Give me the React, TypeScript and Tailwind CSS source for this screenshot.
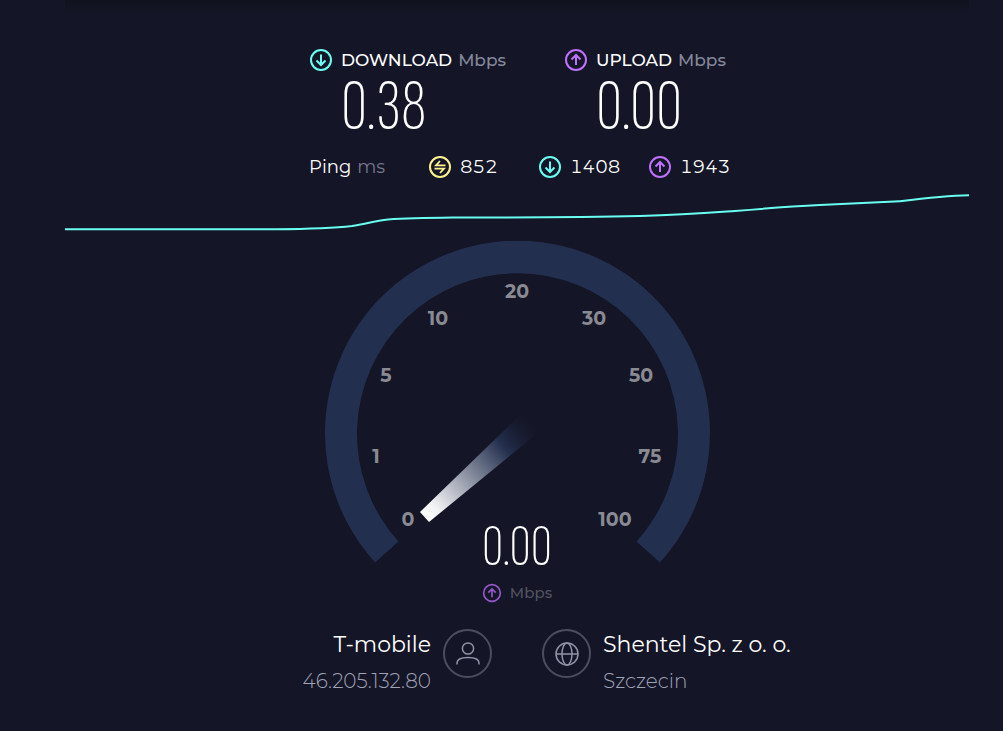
import { ReactNode } from 'react'

const CircleArrow = ({ up = false, size = 'size-6' }: { up?: boolean; size?: string }) => (
  <svg viewBox="0 0 24 24" fill="none" stroke="currentColor" strokeWidth="2" className={`${size} shrink-0`} aria-hidden="true">
    <circle cx="12" cy="12" r="10" />
    {up ? <path d="M12 17V7.5M7.5 11.5L12 7L16.5 11.5" /> : <path d="M12 6.5V16.5M7.5 12.5L12 17L16.5 12.5" />}
  </svg>
)

const CirclePing = () => (
  <svg viewBox="0 0 24 24" fill="none" stroke="currentColor" strokeWidth="2" className="size-6 shrink-0" aria-hidden="true">
    <circle cx="12" cy="12" r="10" />
    <path d="M17.5 10.3H8L12 6M6.5 13.7H16L12 18" strokeWidth="1.8" />
  </svg>
)

const UserIcon = () => (
  <svg viewBox="0 0 26 26" fill="none" stroke="currentColor" strokeWidth="1.5" className="size-[26px]" aria-hidden="true">
    <circle cx="13" cy="7.5" r="5.6" />
    <path d="M2 23.5V22C2 18 7 16.5 13 16.5S24 18 24 22V23.5" />
  </svg>
)

const GlobeIcon = () => (
  <svg viewBox="0 0 26 26" fill="none" stroke="currentColor" strokeWidth="1.5" className="size-[26px]" aria-hidden="true">
    <circle cx="13" cy="13" r="11" />
    <ellipse cx="13" cy="13" rx="5" ry="11" />
    <path d="M2 13H24" />
  </svg>
)

const ticks = [
  { label: '0', x: 83, y: 278 },
  { label: '1', x: 51, y: 215 },
  { label: '5', x: 61, y: 134 },
  { label: '10', x: 113, y: 77 },
  { label: '20', x: 192, y: 50 },
  { label: '30', x: 269, y: 77 },
  { label: '50', x: 316, y: 134 },
  { label: '75', x: 325, y: 215 },
  { label: '100', x: 290, y: 278 }
]

const Result = ({ title, value, icon }: { title: string; value: string; icon: ReactNode }) => (
  <div className="grid grid-cols-[24px_1fr] gap-x-2">
    {icon}
    <h2 className="flex gap-1.5 whitespace-nowrap text-[17px] leading-6 font-medium">
      {title} <span className="text-[#85879b]">Mbps</span>
    </h2>
    <p className="col-start-2 font-['Sofia_Sans_Extra_Condensed','Roboto_Condensed',sans-serif] text-[74px] leading-[70px] font-extralight">
      {value}
    </p>
  </div>
)

const Gauge = () => (
  <section className="flex flex-col items-center" aria-label="Speed gauge">
    <svg viewBox="0 0 385 322" className="w-[385px] max-w-full" aria-hidden="true">
      <defs>
        <linearGradient id="needle" gradientUnits="userSpaceOnUse" x1="100" y1="276" x2="213" y2="177">
          <stop offset="0" stopColor="#ffffff" />
          <stop offset="0.1" stopColor="#f0f1f3" />
          <stop offset="0.7" stopColor="#24304f" />
          <stop offset="1" stopColor="#141526" stopOpacity="0" />
        </linearGradient>
      </defs>
      <path
        d="M50 321.5A192.5 192.5 0 1 1 335 321.5L311.5 300.5A160.5 160.5 0 1 0 73.5 300.5Z"
        fill="#232f4f"
      />
      <path d="M95 271L196 173L214 191L104 281Z" fill="url(#needle)" />
      {ticks.map((tick) => (
        <text key={tick.label} x={tick.x} y={tick.y} dy="7" textAnchor="middle" className="fill-[#8a8a93] text-[19px] font-bold">
          {tick.label}
        </text>
      ))}
    </svg>
    <p className="-mt-[42px] font-['Sofia_Sans_Extra_Condensed','Roboto_Condensed',sans-serif] text-[60px] leading-[52px] font-extralight">
      0.00
    </p>
    <p className="mt-1.5 flex items-center gap-2 text-[15px] leading-7 font-medium text-[#51525f]">
      <span className="text-[#9457c9]"><CircleArrow up size="size-5" /></span>
      Mbps
    </p>
  </section>
)

const App = () => {
  return (
    <main className="min-h-screen bg-[#141526] pr-[34px] pl-[65px] font-['Montserrat','Inter',sans-serif] text-white">
      <div className="h-3 bg-linear-to-b from-[#10121c] to-[#141526]" />

      {/* Results */}
      <header className="mx-auto w-[416px] max-w-full pt-9">
        <div className="grid grid-cols-[255px_1fr]">
          <Result title="DOWNLOAD" value="0.38" icon={<span className="text-[#6afff3]"><CircleArrow /></span>} />
          <Result title="UPLOAD" value="0.00" icon={<span className="text-[#bf71ff]"><CircleArrow up /></span>} />
        </div>
        <div className="mt-[13px] grid grid-cols-[119px_110px_110px_1fr] text-[18px] leading-6 tabular-nums">
          <p className="flex gap-1.5">
            Ping <span className="text-[#777990]">ms</span>
          </p>
          <p className="flex gap-2"><span className="text-[#fff38e]"><CirclePing /></span>852</p>
          <p className="flex gap-2"><span className="text-[#6afff3]"><CircleArrow /></span>1408</p>
          <p className="flex gap-2"><span className="text-[#bf71ff]"><CircleArrow up /></span>1943</p>
        </div>
      </header>

      {/* Throughput history */}
      <svg viewBox="0 0 904 44" preserveAspectRatio="none" className="mt-[11px] h-11 w-full" aria-hidden="true">
        <path
          d="M0 39.3H210C240 39 270 38 287 36C302 33.5 310 31 323 29.5C345 28 365 27.8 390 27.5C470 27.5 530 27 575 26C620 24.5 640 23 670 21C705 18 725 16.5 755 15C785 13.5 810 12.5 835 11.2C860 8 880 5.5 904 5.2"
          fill="none"
          stroke="#6afff3"
          strokeWidth="2"
          vectorEffect="non-scaling-stroke"
        />
      </svg>

      <div className="mt-[7px]">
        <Gauge />
      </div>

      {/* Connection */}
      <footer className="mt-[22px] grid grid-cols-2 gap-[50px] pb-8">
        <div className="flex justify-end gap-3 text-right">
          <div>
            <p className="text-[22px] leading-8">T-mobile</p>
            <p className="mt-1 text-[20px] leading-8 font-light text-[#a0a2b8]">46.205.132.80</p>
          </div>
          <div className="flex size-[49px] items-center justify-center rounded-full border-2 border-[#4c4d5e] text-[#9193a8]">
            <UserIcon />
          </div>
        </div>
        <div className="flex gap-3">
          <div className="flex size-[49px] items-center justify-center rounded-full border-2 border-[#4c4d5e] text-[#9193a8]">
            <GlobeIcon />
          </div>
          <div>
            <p className="text-[22px] leading-8">Shentel Sp. z o. o.</p>
            <p className="mt-1 text-[20px] leading-8 font-light text-[#a0a2b8]">Szczecin</p>
          </div>
        </div>
      </footer>
    </main>
  )
}

export default App
